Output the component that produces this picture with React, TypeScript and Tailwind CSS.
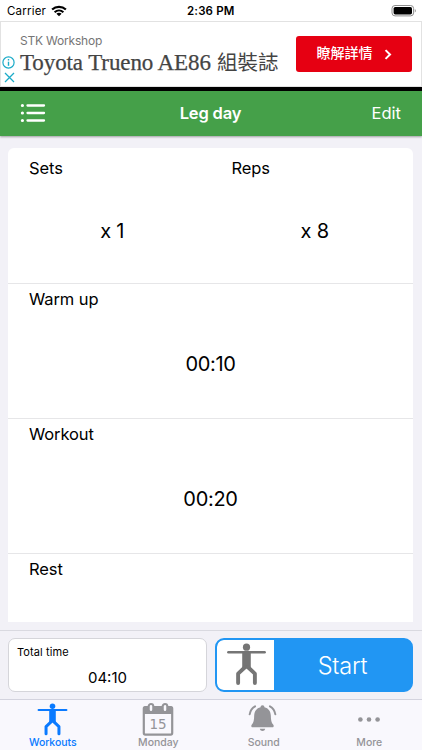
import React from 'react';

interface TabItemProps {
  label: string;
  active?: boolean;
  labelClass?: string;
  children: React.ReactNode;
}

function StretchFigure({ className }: { className?: string }) {
  return (
    <svg viewBox="0 0 40 44" className={className} fill="none" stroke="currentColor">
      <circle cx="20" cy="4.2" r="3.7" fill="currentColor" stroke="none" />
      <path d="M1.4 9.4H38.6" strokeWidth="2.6" strokeLinecap="round" />
      <path d="M15.6 9.4H24.4V26H15.6z" fill="currentColor" stroke="none" />
      <path d="M18.4 24.8L11.4 31.4V41" strokeWidth="4" strokeLinecap="round" strokeLinejoin="round" />
      <path d="M21.6 24.8L28.6 31.4V41" strokeWidth="4" strokeLinecap="round" strokeLinejoin="round" />
    </svg>
  );
}

function StatusBar() {
  return (
    <div className="flex h-[21px] shrink-0 items-center bg-white pl-[7px] pr-[5px] text-[11.5px] leading-[21px]">
      <div className="flex w-[180px] items-center gap-[5px]">
        <span className="pt-px tracking-[0.2px]">Carrier</span>
        <svg viewBox="0 0 16 12" className="h-[12px] w-[16px]" fill="none" stroke="black">
          <path d="M1.1 4.5C5 0.9 11 0.9 14.9 4.5" strokeWidth="2.2" />
          <path d="M3.6 7.2C6.2 4.9 9.8 4.9 12.4 7.2" strokeWidth="2.1" />
          <path d="M8 11.3L5.4 8.8C6.9 7.5 9.1 7.5 10.6 8.8z" fill="black" stroke="none" />
        </svg>
      </div>
      <span className="pt-px font-semibold tracking-[0.15px]">2:36 PM</span>
      <svg viewBox="0 0 26 12" className="ml-auto h-[12px] w-[26px]" fill="none">
        <rect x="1" y="0.5" width="21.6" height="10.4" rx="3" stroke="#8e8e8e" />
        <rect x="2.6" y="2" width="18.4" height="7.4" rx="1.6" fill="black" />
        <path d="M23.8 4v3.6c1.4-.6 1.4-3 0-3.6z" fill="#8e8e8e" />
      </svg>
    </div>
  );
}

function AdBanner() {
  return (
    <div className="flex h-[66px] shrink-0 border border-[#e2e2e2] bg-white">
      <div className="flex w-[18px] shrink-0 flex-col items-start gap-[3px] pl-[1px] pt-[34px]">
        <svg viewBox="0 0 13 13" className="h-[13px] w-[13px] shrink-0" fill="none" stroke="#1cabc8">
          <circle cx="6.5" cy="6.5" r="5.6" strokeWidth="1.2" />
          <path d="M6.5 5.7V9.8" strokeWidth="1.4" />
          <path d="M6.5 3V4.5" strokeWidth="1.4" />
        </svg>
        <svg viewBox="0 0 11 11" className="ml-[2px] h-[11px] w-[11px] shrink-0" fill="none" stroke="#1cabc8" strokeWidth="1.3">
          <path d="M1 1L10 10M10 1L1 10" />
        </svg>
      </div>
      <div className="flex flex-1 flex-col whitespace-nowrap pl-px pt-[11px]">
        <div className="h-[16px] text-[12px] leading-[16px] tracking-[-0.2px] text-[#757575]">STK Workshop</div>
        <div className="flex h-[28px] items-start text-[#444]">
          <span className="w-[197px] font-['Liberation_Serif',serif] text-[23px] leading-[28px] tracking-[-0.1px] [-webkit-text-stroke:0.25px_#444]">Toyota Trueno AE86</span>
          <span className="-mt-[2px] font-['Noto_Sans_CJK_TC',sans-serif] text-[20.5px] leading-[28px]">組裝誌</span>
        </div>
      </div>
      <div className="mr-[9px] mt-[14px] flex h-[36px] w-[116px] items-center justify-center gap-[11px] rounded-[3px] bg-[#e60012] text-white">
        <span className="font-['Noto_Sans_CJK_TC',sans-serif] text-[14px] font-medium leading-[32px] pb-[4px]">瞭解詳情</span>
        <svg viewBox="0 0 8 12" className="h-[11px] w-[8px]" fill="none" stroke="white" strokeWidth="2.2">
          <path d="M1.3 1.2L6.2 6L1.3 10.8" />
        </svg>
      </div>
    </div>
  );
}

function NavBar() {
  return (
    <div className="z-10 flex h-[45px] shrink-0 items-center justify-between bg-[#45a049] pl-[20px] pr-[21px] text-white shadow-[0_1px_2px_rgba(0,0,0,0.35)]">
      <svg viewBox="0 0 26 20" className="-mt-px h-[20px] w-[60px]" preserveAspectRatio="xMinYMid" stroke="white" strokeLinecap="round">
        <path d="M7.5 2.5H24M7.5 10H24M7.5 17.5H24" strokeWidth="2.3" />
        <path d="M2.4 2.5h.01M2.4 10h.01M2.4 17.5h.01" strokeWidth="3.2" />
      </svg>
      <span className="text-[16.5px] font-semibold tracking-[-0.15px]">Leg day</span>
      <span className="w-[60px] text-right text-[16.5px]">Edit</span>
    </div>
  );
}

function TimeRow({ label, value }: { label: string; value?: string }) {
  return (
    <div className="h-[135px] shrink-0 border-t border-[#e6e6e8]">
      <div className="h-[30px] pl-[21px] text-[16.5px] leading-[31px] tracking-[-0.1px]">{label}</div>
      <div className="pt-[34px] text-center text-[20px] leading-[32px] tracking-[-0.3px]">{value}</div>
    </div>
  );
}

function CountCell({ label, value }: { label: string; value: string }) {
  return (
    <div className="flex-1">
      <div className="h-[40px] pl-[21px] text-[16.5px] leading-[41px] tracking-[-0.1px]">{label}</div>
      <div className="pl-[6px] pt-[27px] text-center text-[20px] leading-[32px] tracking-[-0.2px]">{value}</div>
    </div>
  );
}

function TabItem({ label, active, labelClass, children }: TabItemProps) {
  return (
    <div className={`flex flex-1 flex-col items-center ${active ? 'text-[#0a7aff]' : 'text-[#949498]'}`}>
      <div className="flex h-[37px] items-center justify-center">{children}</div>
      <span className={`text-[10.5px] font-medium leading-[12px] ${labelClass ?? ''}`}>{label}</span>
    </div>
  );
}

export default function App() {
  return (
    <div className="flex h-[750px] w-[422px] flex-col overflow-hidden bg-[#f2f1f7] font-['Inter','Liberation_Sans',sans-serif] text-black">
      <StatusBar />
      <AdBanner />
      <div className="h-[4px] shrink-0 bg-black" />
      <NavBar />

      <div className="mx-[8px] mt-[12px] flex h-[474px] w-[405px] shrink-0 flex-col overflow-hidden rounded-t-[6px] bg-white">
        <div className="flex h-[135px] shrink-0">
          <CountCell label="Sets" value="x 1" />
          <CountCell label="Reps" value="x 8" />
        </div>
        <TimeRow label="Warm up" value="00:10" />
        <TimeRow label="Workout" value="00:20" />
        <TimeRow label="Rest" />
      </div>

      <div className="mt-[8px] flex h-[69px] shrink-0 gap-[8px] border-t border-[#d9d9e0] px-[8px] pt-[7px]">
        <div className="h-[54px] w-[199px] rounded-[7px] border border-[#d5d5da] bg-white">
          <div className="pl-[8px] pt-[5px] text-[11px] leading-[16px] tracking-[0.1px]">Total time</div>
          <div className="pt-[9px] text-center text-[15px] leading-[18px]">04:10</div>
        </div>
        <div className="flex h-[54px] w-[198px] overflow-hidden rounded-[9px] border-2 border-[#2196f3] bg-[#2196f3]">
          <div className="flex w-[57px] items-center justify-center rounded-l-[6px] bg-white text-[#757575]">
            <StretchFigure className="-mt-px ml-[2px] h-[43px] w-[39px]" />
          </div>
          <div className="flex-1 pt-px text-center text-[23.5px] font-light leading-[50px] tracking-[-0.2px] text-white">Start</div>
        </div>
      </div>

      <div className="flex h-[51px] shrink-0 border-t border-[#d3d3de] bg-[#f9f8fd]">
        <TabItem label="Workouts" active labelClass="tracking-[-0.05px]">
          <StretchFigure className="mt-px h-[33px] w-[31px]" />
        </TabItem>
        <TabItem label="Monday" labelClass="tracking-[-0.05px]">
          <svg viewBox="0 0 32 34" className="mt-px h-[34px] w-[32px]" fill="none" stroke="currentColor">
            <rect x="1.8" y="5" width="28.4" height="27.6" rx="1.5" strokeWidth="2.2" />
            <path d="M1.8 5H30.2V11.5H1.8z" fill="currentColor" />
            <rect x="6.7" y="2" width="4.6" height="8" rx="2.3" strokeWidth="2.1" fill="#f9f8fd" />
            <rect x="20.7" y="2" width="4.6" height="8" rx="2.3" strokeWidth="2.1" fill="#f9f8fd" />
            <text x="16" y="27.2" textAnchor="middle" fontSize="13.5" fill="currentColor" stroke="none" className="font-['DejaVu_Sans',sans-serif]">15</text>
          </svg>
        </TabItem>
        <TabItem label="Sound" labelClass="tracking-[-0.05px]">
          <svg viewBox="0 0 30 28" className="-ml-[3px] -mt-px h-[28px] w-[29px]" fill="none" stroke="currentColor">
            <path d="M15 .8c1.3 0 2 .9 2 2.1 4.2 1 6.4 4.2 6.600 8.600.1 4.800.5 7.500 2.400 9.200.9.900.900 2.800-.6 2.800H4.600c-1.500 0-1.500-1.900-.6-2.800 1.900-1.700 2.300-4.400 2.400-9.200.2-4.400 2.400-7.600 6.600-8.600 0-1.200.7-2.100 2-2.100z" fill="currentColor" stroke="none" />
            <path d="M12.200 25.100h5.600c-.4 1.500-1.400 2.300-2.800 2.300s-2.400-.8-2.800-2.300z" fill="currentColor" stroke="none" />
            <path d="M7.300 1.900C4.300 3.600 2.300 6.500 1.700 10.200M22.700 1.900C25.700 3.600 27.700 6.500 28.300 10.200" strokeWidth="2" strokeLinecap="round" />
          </svg>
        </TabItem>
        <TabItem label="More" labelClass="tracking-[-0.05px]">
          <svg viewBox="0 0 22 5" className="mt-px h-[5px] w-[22px]" fill="currentColor">
            <circle cx="2.4" cy="2.5" r="2.3" />
            <circle cx="11" cy="2.5" r="2.3" />
            <circle cx="19.6" cy="2.5" r="2.3" />
          </svg>
        </TabItem>
      </div>
    </div>
  );
}
